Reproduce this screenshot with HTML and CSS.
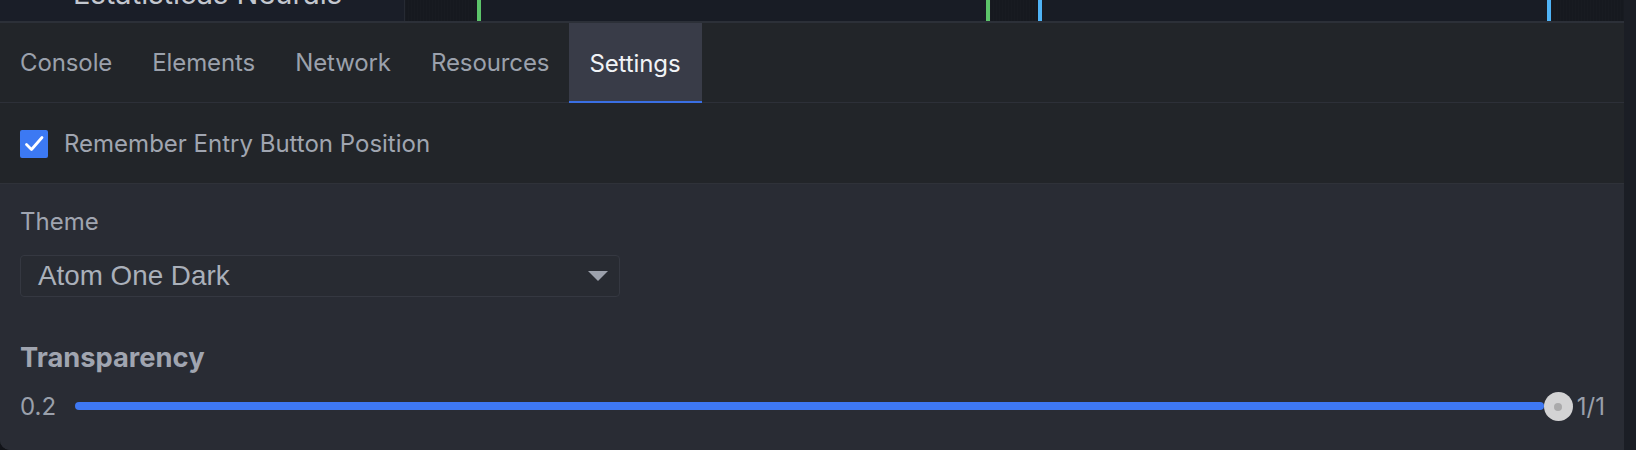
FILE: index.html
```html
<!DOCTYPE html>
<html lang="en">
<head>
<meta charset="utf-8">
<title>Settings</title>
<link rel="stylesheet" href="styles.css">
</head>
<body>
<div class="app">
  <div class="main">
    <div class="topbar">
      <div class="tb-title"><span class="tb-title-text">Estatísticas Neurais</span></div>
      <div class="timeline">
        <div class="seg seg-dark seg-a"></div>
        <div class="mark mark-green"></div>
        <div class="seg seg-b"></div>
        <div class="mark mark-green"></div>
        <div class="seg seg-dark seg-c"></div>
        <div class="mark mark-blue"></div>
        <div class="seg seg-b"></div>
        <div class="mark mark-blue"></div>
        <div class="seg seg-dark seg-d"></div>
      </div>
    </div>
    <div class="tabs">
      <div class="tab">Console</div>
      <div class="tab">Elements</div>
      <div class="tab">Network</div>
      <div class="tab">Resources</div>
      <div class="tab tab-active">Settings</div>
    </div>
    <div class="check-row">
      <span class="checkbox">
        <svg width="28" height="28" viewBox="0 0 28 28"><path d="M6.5 14.5 L11.5 19.5 L22 7.5" fill="none" stroke="#ffffff" stroke-width="2.8" stroke-linecap="round" stroke-linejoin="round"/></svg>
      </span>
      <span class="check-label">Remember Entry Button Position</span>
    </div>
    <div class="section">
      <div class="field-label">Theme</div>
      <div class="select">
        <span class="select-text">Atom One Dark</span>
        <span class="select-arrow"></span>
      </div>
      <div class="heading">Transparency</div>
      <div class="slider">
        <span class="slider-val">0.2</span>
        <div class="slider-fill"></div>
        <div class="slider-thumb"><span class="thumb-dot"></span></div>
        <span class="slider-val slider-max">1/1</span>
      </div>
    </div>
  </div>
  <div class="edge"></div>
</div>
</body>
</html>
```
FILE: styles.css
```css
html, body {
  margin: 0;
  padding: 0;
  background: #121419;
}
body {
  width: 1636px;
  height: 450px;
  overflow: hidden;
  font-family: "Inter", "Noto Sans", sans-serif;
}
.app {
  display: flex;
  width: 1636px;
  height: 450px;
}
.main {
  width: 1624px;
  height: 450px;
  display: flex;
  flex-direction: column;
  overflow: hidden;
  border-bottom-left-radius: 10px;
  background: #292c34;
}
.edge {
  width: 12px;
  height: 450px;
  background: #1b1e25;
}

/* top strip */
.topbar {
  height: 21px;
  display: flex;
  border-bottom: 2px solid #2c3038;
  flex: none;
}
.tb-title {
  width: 405px;
  height: 21px;
  overflow: hidden;
  background: #1a1e28;
  border-right: 1px solid #262a33;
  box-sizing: border-box;
  padding-left: 73px;
}
.tb-title-text {
  display: block;
  font-size: 29px;
  line-height: 30px;
  margin-top: -21px;
  color: #c3c7cf;
  white-space: nowrap;
}
.timeline {
  flex: 1;
  display: flex;
  background: #181c25;
}
.seg { height: 21px; }
.seg-dark {
  background-color: #16191f;
  background-image: linear-gradient(90deg, rgba(255,255,255,0.008) 1px, transparent 1px);
  background-size: 3px 3px;
}
.seg-a { width: 72px; }
.seg-b { width: 505px; }
.seg-c { width: 48px; }
.seg-d { flex: 1; }
.mark { width: 4px; height: 21px; }
.mark-green { background: #5cc46a; }
.mark-blue { background: #4fb3f6; }

/* tabs */
.tabs {
  flex: none;
  height: 79px;
  display: flex;
  background: #222529;
  border-bottom: 1px solid #2d3038;
}
.tab {
  padding: 0 20px;
  display: flex;
  align-items: center;
  font-size: 24px;
  letter-spacing: -0.1px;
  color: #9ba1ac;
  height: 79px;
  box-sizing: border-box;
}
.tab-active {
  background: #393c48;
  color: #f1f3f6;
  height: 80px;
  border-bottom: 2px solid #3a6fe3;
  padding: 2px 21px 0 20px;
}

/* checkbox row */
.check-row {
  flex: none;
  height: 81px;
  box-sizing: border-box;
  display: flex;
  align-items: center;
  padding-left: 20px;
  background: #222529;
  border-bottom: 1px solid #2f3239;
}
.checkbox {
  width: 28px;
  height: 28px;
  border-radius: 2px;
  background: #3c79f3;
  display: flex;
  margin-top: 1px;
}
.check-label {
  margin-left: 16px;
  font-size: 24px;
  color: #a0a5b0;
}

/* section */
.section {
  flex: 1;
  padding: 23px 19px 0 20px;
  background: #292c34;
}
.field-label {
  font-size: 24px;
  line-height: 30px;
  color: #a0a5b0;
}
.select {
  margin-top: 18px;
  width: 600px;
  height: 42px;
  box-sizing: border-box;
  border: 1px solid #353841;
  border-radius: 4px;
  background: #282b32;
  display: flex;
  align-items: center;
  justify-content: space-between;
  padding: 0 11px 0 17px;
}
.select-text {
  font-family: "Liberation Sans", Arial, sans-serif;
  font-size: 27.8px;
  color: #aab0ba;
}
.select-arrow {
  width: 0;
  height: 0;
  border-left: 10px solid transparent;
  border-right: 10px solid transparent;
  border-top: 10px solid #9ca1ac;
}
.heading {
  margin-top: 44px;
  font-size: 27.3px;
  line-height: 34px;
  font-weight: 700;
  color: #a0a5b0;
}
.slider {
  margin-top: 16px;
  height: 30px;
  display: flex;
  align-items: center;
}
.slider-val {
  font-size: 24px;
  color: #9aa0ab;
}
.slider-fill {
  flex: 1;
  height: 8px;
  border-radius: 4px;
  background: #3e78f3;
  margin-left: 19px;
}
.slider-thumb {
  width: 29px;
  height: 29px;
  border-radius: 50%;
  background: #d3d3d4;
  display: flex;
  align-items: center;
  justify-content: center;
  margin-top: 1px;
}
.thumb-dot {
  width: 8px;
  height: 8px;
  border-radius: 50%;
  background: #aaaaab;
}
.slider-max {
  margin-left: 4px;
}
```
